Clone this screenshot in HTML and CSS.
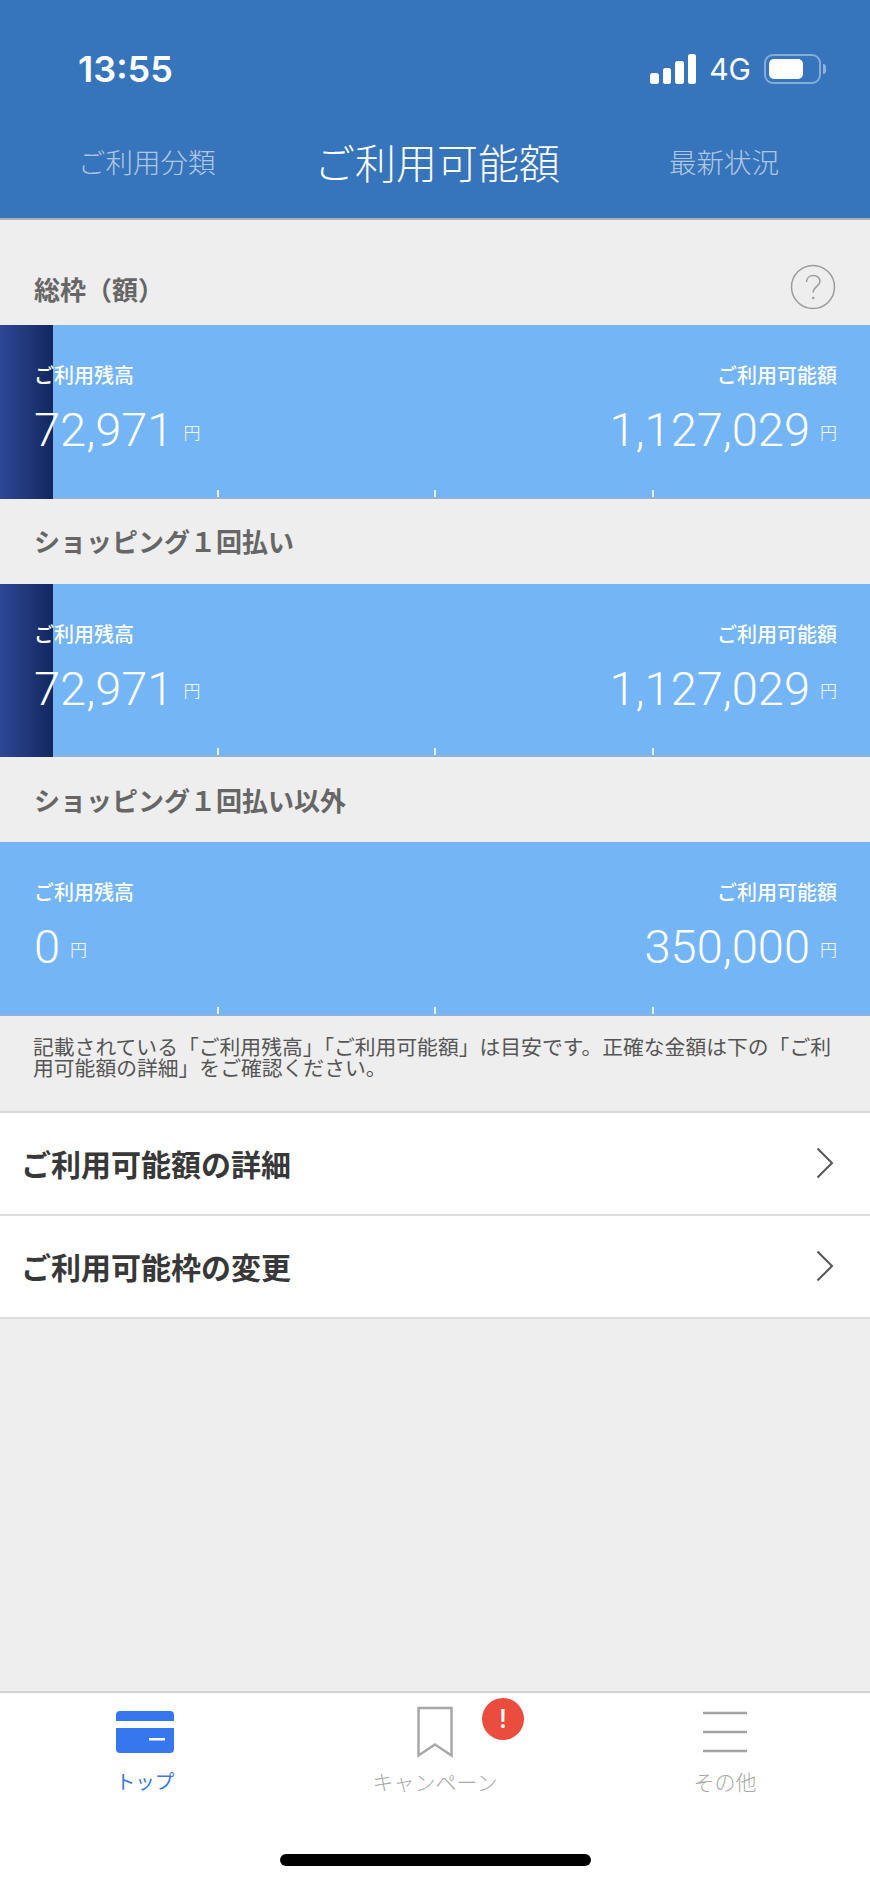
FILE: index.html
```html
<!DOCTYPE html>
<html lang="ja">
<head>
<meta charset="utf-8">
<title>ご利用可能額</title>
<link rel="stylesheet" href="styles.css">
</head>
<body>
<div class="page">
  <header class="header">
    <div class="status">
      <span class="time">13:55</span>
      <div class="status-right">
        <div class="signal"><i class="s1"></i><i class="s2"></i><i class="s3"></i><i class="s4"></i></div>
        <span class="net">4G</span>
        <div class="battery"><div class="battery-fill"></div></div>
        <div class="battery-cap"></div>
      </div>
    </div>
    <nav class="nav">
      <span class="nav-side nav-left">ご利用分類</span>
      <span class="nav-title">ご利用可能額</span>
      <span class="nav-side nav-right">最新状況</span>
    </nav>
  </header>
  <main class="main">
    <div class="section-head first">
      <h2 class="section-title">総枠（額）</h2>
      <svg class="help" width="46" height="46" viewBox="0 0 46 46"><circle cx="23" cy="23" r="21.5" fill="none" stroke="#9c9c9c" stroke-width="1.5"/><path d="M16.5 18c0-4 3-6.5 6.8-6.5 3.8 0 6.7 2.500 6.700 5.800 0 5.200-6.800 5.200-6.800 11.200" fill="none" stroke="#9c9c9c" stroke-width="1.500"/><circle cx="23.200" cy="34" r="1.300" fill="#9c9c9c"/></svg>
    </div>
    <section class="bar">
      <div class="used"></div>
      <div class="bar-side"><div class="bar-label">ご利用残高</div><div class="bar-value"><span class="num">72,971</span><span class="yen">円</span></div></div>
      <div class="bar-side right"><div class="bar-label">ご利用可能額</div><div class="bar-value"><span class="num">1,127,029</span><span class="yen">円</span></div></div>
      <i class="tick t1"></i><i class="tick t2"></i><i class="tick t3"></i>
    </section>
    <div class="section-head">
      <h2 class="section-title">ショッピング１回払い</h2>
    </div>
    <section class="bar">
      <div class="used"></div>
      <div class="bar-side"><div class="bar-label">ご利用残高</div><div class="bar-value"><span class="num">72,971</span><span class="yen">円</span></div></div>
      <div class="bar-side right"><div class="bar-label">ご利用可能額</div><div class="bar-value"><span class="num">1,127,029</span><span class="yen">円</span></div></div>
      <i class="tick t1"></i><i class="tick t2"></i><i class="tick t3"></i>
    </section>
    <div class="section-head">
      <h2 class="section-title">ショッピング１回払い以外</h2>
    </div>
    <section class="bar">
      <div class="bar-side"><div class="bar-label">ご利用残高</div><div class="bar-value"><span class="num">0</span><span class="yen">円</span></div></div>
      <div class="bar-side right"><div class="bar-label">ご利用可能額</div><div class="bar-value"><span class="num">350,000</span><span class="yen">円</span></div></div>
      <i class="tick t1"></i><i class="tick t2"></i><i class="tick t3"></i>
    </section>
    <p class="note">記載されている「ご利用残高」「ご利用可能額」は目安です。正確な金額は下の「ご利用可能額の詳細」をご確認ください。</p>
    <ul class="list">
      <li class="row"><span>ご利用可能額の詳細</span><svg class="chev" width="18" height="32" viewBox="0 0 18 32"><path d="M1.500 1.500 16 16 1.500 30.500" fill="none" stroke="#555" stroke-width="2"/></svg></li>
      <li class="row"><span>ご利用可能枠の変更</span><svg class="chev" width="18" height="32" viewBox="0 0 18 32"><path d="M1.500 1.500 16 16 1.500 30.500" fill="none" stroke="#555" stroke-width="2"/></svg></li>
    </ul>
  </main>
  <footer class="tabbar">
    <div class="tabs">
      <div class="tab active">
        <svg class="tab-icon" width="58" height="44" viewBox="0 0 58 44"><path d="M4 1h50a4 4 0 0 1 4 4v6H0V5a4 4 0 0 1 4-4zM0 18h58v21a4 4 0 0 1-4 4H4a4 4 0 0 1-4-4z" fill="#3677f0"/><rect x="33" y="28" width="16" height="2.500" fill="#fff"/></svg>
        <span class="tab-label">トップ</span>
      </div>
      <div class="tab">
        <svg class="tab-icon" width="36" height="52" viewBox="0 0 36 52"><path d="M1.500 2h33v47.500L18 38.500 1.500 49.500z" fill="none" stroke="#a8a8a8" stroke-width="2.500"/></svg>
        <span class="tab-label">キャンペーン</span>
        <span class="badge">!</span>
      </div>
      <div class="tab">
        <svg class="tab-icon" width="44" height="44" viewBox="0 0 44 44"><path d="M0 3h44M0 22h44M0 41h44" stroke="#a3a3a3" stroke-width="2.500"/></svg>
        <span class="tab-label">その他</span>
      </div>
    </div>
    <div class="home"></div>
  </footer>
</div>
</body>
</html>
```
FILE: styles.css
```css
* { box-sizing: border-box; }
html, body { margin: 0; padding: 0; }
body {
  width: 870px;
  height: 1884px;
  overflow: hidden;
  font-family: "Noto Sans CJK JP", "Noto Sans", sans-serif;
  background: #eeeeee;
}
.page { display: flex; flex-direction: column; height: 1884px; }

.header {
  height: 220px;
  background: #3674bc;
  border-bottom: 2px solid #a9adb4;
  color: #fff;
  flex: none;
}
.status {
  height: 128px;
  padding: 52px 44px 0 78px;
  display: flex;
  justify-content: space-between;
  align-items: flex-start;
}
.time {
  font-family: Inter, sans-serif;
  font-weight: 600;
  font-size: 36px;
  line-height: 34px;
  letter-spacing: 0;
}
.status-right { display: flex; align-items: center; height: 34px; }
.signal { display: flex; align-items: flex-end; gap: 4px; height: 30px; margin-right: 13px; }
.signal i { display: block; width: 8.500px; background: #fff; border-radius: 2.500px; }
.s1 { height: 11px; }
.s2 { height: 16px; }
.s3 { height: 23px; }
.s4 { height: 30px; }
.net { font-family: Inter, sans-serif; font-size: 30px; line-height: 34px; margin-right: 13px; }
.battery {
  width: 57px;
  height: 30px;
  border: 2px solid rgba(255,255,255,.4);
  border-radius: 9px;
  padding: 3px;
}
.battery-fill { width: 34px; height: 20px; background: #fff; border-radius: 5px; }
.battery-cap { width: 3px; height: 10px; margin-left: 2px; background: rgba(255,255,255,.45); border-radius: 0 3px 3px 0; }

.nav { position: relative; height: 90px; }
.nav-side, .nav-title { position: absolute; white-space: nowrap; }
.nav-side { font-size: 27.500px; line-height: 40px; top: 13px; color: rgba(255,255,255,.62); font-weight: 300; }
.nav-left { left: 78px; }
.nav-right { left: 669px; }
.nav-title { left: 314px; top: 5px; font-size: 41px; line-height: 56px; font-weight: 300; }

.main { flex: 1; display: flex; flex-direction: column; }
.section-head {
  height: 85px;
  padding: 0 0 0 34px;
  display: flex;
  align-items: center;
  justify-content: space-between;
}
.section-head.first { height: 105px; padding: 32px 34px 0 34px; }
.section-head.first .help { margin-top: 0; }
.section-title { margin: 0; font-size: 26px; font-weight: 700; color: #666; line-height: 36px; }
.help { margin-right: 0; margin-bottom: 4px; }

.bar {
  position: relative;
  height: 173.500px;
  background: #74b5f5;
  border-bottom: 2px solid #8db3dc;
  padding: 36px 33px 0 34px;
  display: flex;
  justify-content: space-between;
  color: #fff;
}
.used {
  position: absolute;
  left: 0; top: 0; bottom: -2px;
  width: 53px;
  background: linear-gradient(90deg, #2e4795, #13285f);
}
.bar-side { position: relative; }
.bar-side.right { text-align: right; }
.bar-label { font-size: 20px; font-weight: 500; line-height: 28px; }
.bar-value { display: flex; align-items: center; margin-top: 9px; height: 64px; }
.right .bar-value { justify-content: flex-end; }
.num { font-family: Roboto, sans-serif; font-weight: 300; font-size: 47px; line-height: 64px; }
.yen { font-size: 17px; font-weight: 300; margin-left: 10px; margin-top: 2px; }
.tick { position: absolute; bottom: 0; width: 2px; height: 7px; background: #e6f1fc; }
.t1 { left: 217px; }
.t2 { left: 434px; }
.t3 { left: 652px; }

.note {
  margin: 0;
  padding: 20px 34px 0 33px;
  height: 97px;
  font-size: 20.800px;
  line-height: 21.500px;
  color: #555;
  border-bottom: 2px solid #d9d9d9;
  font-weight: 400;
  flex: none;
}
.list { list-style: none; margin: 0; padding: 0; background: #fff; }
.row {
  height: 103px;
  display: flex;
  align-items: center;
  justify-content: space-between;
  padding: 0 36px 0 21px;
  border-bottom: 2px solid #dedede;
  font-size: 30px;
  font-weight: 700;
  color: #383838;
}

.tabbar {
  flex: none;
  height: 193px;
  background: #fff;
  border-top: 2px solid #d4d4d4;
}
.tabs { display: grid; grid-template-columns: repeat(3, 290px); height: 161px; }
.tab {
  position: relative;
  display: flex;
  flex-direction: column;
  align-items: center;
  padding-top: 13px;
  color: #a8a8a8;
}
.tab-icon { display: block; height: 52px; }
.tab-label { font-size: 21px; line-height: 30px; margin-top: 8px; font-weight: 300; }
.tab.active { color: #3a78dc; }
.tab.active .tab-label { font-size: 19.500px; font-weight: 400; }
.badge {
  position: absolute;
  left: 192px;
  top: 5px;
  width: 42px;
  height: 42px;
  border-radius: 50%;
  background: #ea4c3d;
  color: #fff;
  font-family: Inter, sans-serif;
  font-size: 26px;
  font-weight: 500;
  line-height: 42px;
  text-align: center;
}
.home { width: 311px; height: 12px; margin: 0 auto; background: #000; border-radius: 6px; }
```
